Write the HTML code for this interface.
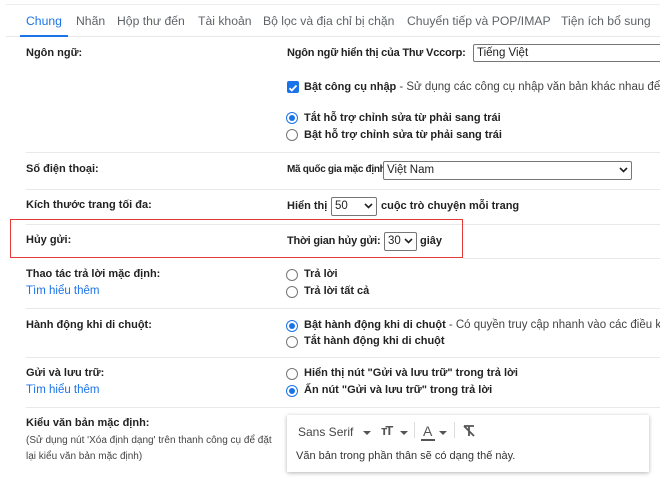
<!DOCTYPE html>
<html><head><meta charset="utf-8"><style>
body{margin:0;width:660px;height:478px;background:#fff;position:relative;overflow:hidden;font-family:"Liberation Sans",Arial,sans-serif;color:#222}
.a{position:absolute;white-space:nowrap;line-height:16px}
.t{font-size:12.2px;color:#5f6368;top:13px}
.b{font-size:11px;font-weight:bold;color:#222}
.n{font-weight:normal;color:#444;font-size:11.5px}
.l{font-size:11.5px;color:#1a73e8}
.hr{position:absolute;left:26px;right:0;height:1px;background:#e8e8e8}
.sel{position:absolute;border:1px solid #767676;border-radius:2px;height:17px;font-size:11.5px;line-height:17px;padding-left:3px;box-sizing:border-box;background:#fff;color:#222}
.sel svg{position:absolute;right:3px;top:5px}
.r{position:absolute;width:10px;height:10px;border:1px solid #767676;border-radius:50%;background:#fff}
.r.on{border-color:#1a73e8}
.r.on:after{content:"";position:absolute;left:2px;top:2px;width:6px;height:6px;border-radius:50%;background:#1a73e8}
</style></head><body>
<div style="position:absolute;left:6px;top:4px;width:654px;height:1px;background:#eee"></div>
<div class="a t" style="left:26px;color:#1a73e8">Chung</div>
<div class="a t" style="left:76px">Nhãn</div>
<div class="a t" style="left:117px">Hộp thư đến</div>
<div class="a t" style="left:198px">Tài khoản</div>
<div class="a t" style="left:263px">Bộ lọc và địa chỉ bị chặn</div>
<div class="a t" style="left:407px">Chuyển tiếp và POP/IMAP</div>
<div class="a t" style="left:561px">Tiện ích bổ sung</div>
<div style="position:absolute;left:6px;top:36px;width:654px;height:1px;background:#e8e8e8"></div>
<div style="position:absolute;left:20px;top:35px;width:48px;height:2px;background:#1a73e8"></div>

<div class="a b" style="left:26px;top:45px">Ngôn ngữ:</div>
<div class="a b" style="left:287px;top:45px;letter-spacing:-0.2px">Ngôn ngữ hiển thị của Thư Vccorp:</div>
<div class="sel" style="left:473px;top:44px;width:200px;height:18px">Tiếng Việt</div>
<div style="position:absolute;left:287px;top:81px;width:12px;height:12px;background:#1a73e8;border-radius:2px"><svg width="12" height="12"><path d="M2.5 6.2l2.3 2.3 4.7-5" stroke="#fff" stroke-width="1.8" fill="none"/></svg></div>
<div class="a b" style="left:304px;top:79px">Bật công cụ nhập <span class="n">- Sử dụng các công cụ nhập văn bản khác nhau để</span></div>
<div class="r on" style="left:286px;top:112px"></div>
<div class="a b" style="left:304px;top:110px">Tắt hỗ trợ chỉnh sửa từ phải sang trái</div>
<div class="r" style="left:286px;top:129px"></div>
<div class="a b" style="left:304px;top:127px">Bật hỗ trợ chỉnh sửa từ phải sang trái</div>
<div class="hr" style="top:152px"></div>

<div class="a b" style="left:26px;top:161px">Số điện thoại:</div>
<div class="a b" style="left:287px;top:162px;font-size:10px;letter-spacing:-0.3px">Mã quốc gia mặc định:</div>
<div class="sel" style="left:383px;top:161px;width:249px;height:19px">Việt Nam<svg width="9" height="6"><path d="M1 1l3.5 3.5L8 1" stroke="#222" stroke-width="1.6" fill="none"/></svg></div>
<div class="hr" style="top:189px"></div>

<div class="a b" style="left:26px;top:197px">Kích thước trang tối đa:</div>
<div class="a b" style="left:287px;top:198px">Hiển thị</div>
<div class="sel" style="left:331px;top:197px;width:46px;height:19px">50<svg width="9" height="6"><path d="M1 1l3.5 3.5L8 1" stroke="#222" stroke-width="1.6" fill="none"/></svg></div>
<div class="a b" style="left:381px;top:198px">cuộc trò chuyện mỗi trang</div>
<div class="hr" style="top:224px"></div>

<div class="a b" style="left:26px;top:232px">Hủy gửi:</div>
<div class="a b" style="left:287px;top:233px;letter-spacing:-0.2px">Thời gian hủy gửi:</div>
<div class="sel" style="left:384px;top:232px;width:33px;height:19px">30<svg width="9" height="6"><path d="M1 1l3.5 3.5L8 1" stroke="#222" stroke-width="1.6" fill="none"/></svg></div>
<div class="a b" style="left:420px;top:233px">giây</div>
<div style="position:absolute;left:10px;top:219px;width:451px;height:37px;border:1.5px solid #e53935"></div>
<div class="hr" style="top:258px;left:463px"></div>

<div class="a b" style="left:26px;top:266px">Thao tác trả lời mặc định:</div>
<div class="a l" style="left:26px;top:283px">Tìm hiểu thêm</div>
<div class="r" style="left:286px;top:269px"></div>
<div class="a b" style="left:304px;top:266px">Trả lời</div>
<div class="r" style="left:286px;top:286px"></div>
<div class="a b" style="left:304px;top:283px">Trả lời tất cả</div>
<div class="hr" style="top:308px"></div>

<div class="a b" style="left:26px;top:317px">Hành động khi di chuột:</div>
<div class="r on" style="left:286px;top:320px"></div>
<div class="a b" style="left:304px;top:317px">Bật hành động khi di chuột <span class="n">- Có quyền truy cập nhanh vào các điều k</span></div>
<div class="r" style="left:286px;top:336px"></div>
<div class="a b" style="left:304px;top:333px">Tắt hành động khi di chuột</div>
<div class="hr" style="top:357px"></div>

<div class="a b" style="left:26px;top:365px">Gửi và lưu trữ:</div>
<div class="a l" style="left:26px;top:382px">Tìm hiểu thêm</div>
<div class="r" style="left:286px;top:368px"></div>
<div class="a b" style="left:304px;top:365px">Hiển thị nút "Gửi và lưu trữ" trong trả lời</div>
<div class="r on" style="left:286px;top:385px"></div>
<div class="a b" style="left:304px;top:382px">Ấn nút "Gửi và lưu trữ" trong trả lời</div>
<div class="hr" style="top:407px"></div>

<div class="a b" style="left:26px;top:415px">Kiểu văn bản mặc định:</div>
<div class="a" style="left:26px;top:433px;font-size:10px;color:#444">(Sử dụng nút 'Xóa định dạng' trên thanh công cụ để đặt</div>
<div class="a" style="left:26px;top:449px;font-size:10px;color:#444">lại kiểu văn bản mặc định)</div>
<div style="position:absolute;left:287px;top:415px;width:362px;height:57px;background:#fff;box-shadow:0 1px 4px rgba(0,0,0,.3)">
 <div class="a" style="left:11px;top:9px;font-size:12px;color:#444">Sans Serif</div>
 <svg style="position:absolute;left:76px;top:16px" width="8" height="5"><path d="M0 0h8L4 4z" fill="#555"/></svg>
 <div class="a" style="left:94px;top:8px;font-size:13px;font-weight:bold;color:#555;letter-spacing:-2px">тT</div>
 <svg style="position:absolute;left:113px;top:16px" width="8" height="5"><path d="M0 0h8L4 4z" fill="#555"/></svg>
 <div style="position:absolute;left:127px;top:7px;width:1px;height:16px;background:#ddd"></div>
 <div class="a" style="left:136px;top:8px;font-size:14px;color:#555">A</div>
 <div style="position:absolute;left:134px;top:24px;width:14px;height:2px;background:#555"></div>
 <svg style="position:absolute;left:152px;top:16px" width="8" height="5"><path d="M0 0h8L4 4z" fill="#555"/></svg>
 <div style="position:absolute;left:167px;top:7px;width:1px;height:16px;background:#ddd"></div>
 <svg style="position:absolute;left:175px;top:9px" width="14" height="14"><path d="M2 2h10M7 2v10M2 2l10 10" stroke="#555" stroke-width="1.8" fill="none"/></svg>
 <div class="a" style="left:9px;top:33px;font-size:11px;color:#333">Văn bản trong phần thân sẽ có dạng thế này.</div>
</div>
</body></html>
